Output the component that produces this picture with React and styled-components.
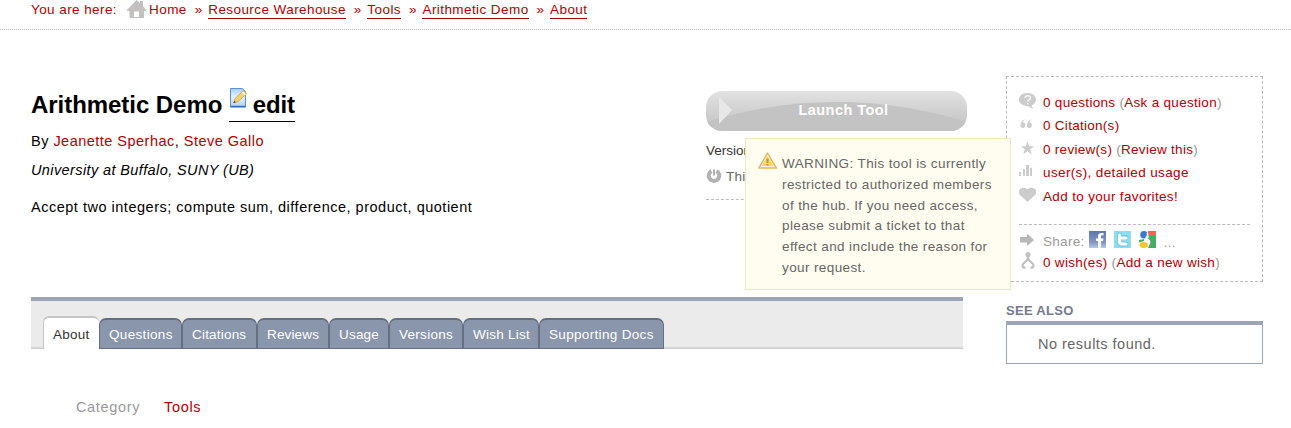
import React from "react";
import styled, { createGlobalStyle } from "styled-components";

const Global = createGlobalStyle`
  * { box-sizing: border-box; }
  body { margin: 0; background: #fff; color: #000; overflow: hidden;
    font-family: "Liberation Sans", Arial, Helvetica, sans-serif; font-size: 13.5px; }
  h1, h2, p, ul { margin: 0; padding: 0; }
  svg { display: block; flex: none; }
`;

const Page = styled.div`width: 1291px; height: 428px; overflow: hidden;`;
const Trail = styled.nav`
  display: flex; align-items: flex-start; height: 30px; padding-left: 31px;
  border-bottom: 1px dotted #bbb; color: #b00000; letter-spacing: 0.42px; line-height: 18px;
`;
const Crumb = styled.a`
  height: 19px; padding-top: 1px; margin-right: ${(p) => p.$gap || 0}px; white-space: nowrap;
  border-bottom: ${(p) => (p.$plain ? "0" : "1px solid #b00000")};
`;
const Sep = styled.span`width: 13.5px; padding-top: 1px; flex: none; letter-spacing: 0;`;
const Home = styled.span`display: flex; width: 22px; margin-left: 10px;`;

const Columns = styled.div`display: flex; padding: 46px 28px 0 31px; align-items: flex-start;`;
const Main = styled.main`width: 936px; margin-right: 39px;`;
const Intro = styled.section`display: flex; justify-content: space-between; height: 221px; padding-top: 12px;`;
const Details = styled.div`width: 600px; font-size: 14.5px; white-space: nowrap;`;
const Title = styled.h1`
  display: flex; height: 34px; font-size: 24px; line-height: 34px; letter-spacing: -0.05px;
`;
const Edit = styled.a`
  display: flex; margin-left: 7px; width: 66px; height: 34px; border-bottom: 1px solid #000;
  span { margin-left: 3.5px; letter-spacing: -0.15px; }
`;
const Line = styled.p`
  margin-top: ${(p) => p.$top}px; line-height: 20px; letter-spacing: ${(p) => p.$ls}px;
  font-style: ${(p) => (p.$italic ? "italic" : "normal")};
`;
const Link = styled.a`color: #b00000;`;
const Launch = styled.div`position: relative; width: 261px; padding-top: 3px;`;
const Button = styled.div`
  display: grid; height: 40px; border-radius: 16px; overflow: hidden;
  > * { grid-area: 1 / 1; }
  span { z-index: 1; align-self: center; text-align: center; color: #fff; font-weight: bold;
    font-size: 14.5px; letter-spacing: 0.45px; padding: 0 0 2px 14px; }
`;
const Version = styled.p`margin-top: 10px; line-height: 20px; color: #333; letter-spacing: 0;`;
const Status = styled.p`
  display: flex; align-items: center; height: 38px; padding-bottom: 9px; margin-top: 1px; gap: 4px;
  border-bottom: 1px dashed #bbb; color: #666; letter-spacing: 0.2px;
`;
const Tooltip = styled.div`
  position: absolute; left: 39px; top: 50px; z-index: 2; width: 266px; height: 152px;
  display: flex; gap: 4px; padding: 13px 12px; background: #fffdf0; border: 1px solid #efe8bb;
  color: #666; line-height: 20.8px; letter-spacing: 0.39px; white-space: nowrap;
  p { padding-top: 2px; }
`;
const TabBar = styled.div`
  display: flex; align-items: flex-end; width: 932px; height: 52px; padding-left: 12px;
  border-top: 4px solid #9ca5b7;
  background: linear-gradient(#ebebeb 0 44px, #f0f0f0 45px, #e0e0e0 46px, #c8c8c8 48px);
`;
const Tab = styled.div`
  width: ${(p) => p.$w}px; height: ${(p) => (p.$on ? 33 : 31)}px;
  padding: ${(p) => (p.$on ? "2px 0 0 9px" : "0 0 0 9px")};
  border: solid ${(p) => (p.$on ? "#c6c6c6" : "#666f80")};
  border-width: ${(p) => (p.$on ? "2px 0 0 1px" : "2px 1px 1px 1px")};
  border-radius: ${(p) => (p.$on ? "6px 6px 0 0" : "7px 7px 0 0")};
  background: ${(p) => (p.$on ? "#fff" : "#8a96ac")};
  color: ${(p) => (p.$on ? "#333" : "#fff")};
  line-height: 29px; letter-spacing: ${(p) => p.$ls}px; white-space: nowrap;
`;
const Category = styled.div`
  display: flex; padding: 48px 0 0 45px; gap: 24px; color: #999; font-size: 14.5px;
  line-height: 20px; letter-spacing: 0.65px;
`;
const Aside = styled.aside`width: 257px;`;
const Stats = styled.div`
  height: 206px; border: 1px dashed #bbb; padding: 14px 12px 0; color: #999;
`;
const Row = styled.div`
  display: flex; height: ${(p) => p.$h}px; letter-spacing: ${(p) => p.$ls}px;
  white-space: nowrap; line-height: 23px;
`;
const IconCell = styled.span`width: 24px; padding-top: ${(p) => p.$top || 2}px; flex: none;`;
const Rule = styled.div`border-top: 1px dashed #bbb; margin: 15px 0 5px;`;
const Shares = styled.span`display: flex; gap: 8px; margin-left: 4px; padding-top: 1px;`;
const See = styled.h2`
  margin-top: 20px; font-size: 13px; line-height: 18px; letter-spacing: 0.3px; color: #737b8c;
`;
const Results = styled.div`
  height: 43px; margin-top: 1px; padding-left: 31px; border: 1px solid #9ca5b7; border-top-width: 4px;
  color: #666; font-size: 14.5px; line-height: 38px; letter-spacing: 0.48px;
`;

const Svg = ({ w = 17, h = 17, children }) => (
  <svg width={w} height={h} viewBox={`0 0 ${w} ${h}`} fill="#ccc">{children}</svg>
);
const HouseIcon = () => (
  <Svg w={19} h={18}>
    <path fill="#c5c0c0" d="M9.5 0 13 3V1h3v5l3 4v1h-2v7H2.5v-7H0v-1Z" />
    <path fill="#fff" d="M7 11.5h5V17H7z" />
  </Svg>
);
const EditIcon = () => (
  <svg width="20" height="22" viewBox="0 0 20 22">
    <defs><linearGradient id="sheet" x1="0" y1="0" x2="0" y2="1">
      <stop stopColor="#a9cdf1" /><stop offset=".45" stopColor="#e4f1fc" /><stop offset="1" stopColor="#b3d3f6" />
    </linearGradient></defs>
    <path d="M1.500 .500h12l3 3V19H1.500Z" fill="url(#sheet)" stroke="#5b93d2" />
    <path d="M1.500 18.500h15" stroke="#2d6ecb" strokeWidth="1.500" />
    <path d="m4.500 15 1.500-4.500L14.500 2.700l3.200 2.900-8.500 7.900Z" fill="#f5d06b" stroke="#c49543" strokeWidth=".7" />
    <path d="m13.300 4 3 3" stroke="#fff" strokeWidth="1.200" />
    <path d="m4.500 15 .8-2.300 1.600 1.500Z" fill="#444" />
  </svg>
);
const WarningIcon = () => (
  <svg width="20" height="18" viewBox="0 0 20 18">
    <path d="M9.500 1.200 18.300 16H.900Z" fill="#fff" stroke="#e9b65a" strokeWidth="1.500" strokeLinejoin="round" />
    <path d="M9.500 4 15.900 14.300H3.200Z" fill="#f8d764" />
    <path d="M9.500 6.500V11M9.500 12v1.600" stroke="#c29a2b" strokeWidth="2" />
  </svg>
);
const QuestionIcon = () => (
  <Svg>
    <path d="M8.500 0C13 0 17 2.500 17 6.500c0 3-2 5-4.500 6L14 16l-5-3C4 13 0 10.500 0 6.500S4 0 8.500 0Z" />
    <path d="M6 5c0-3 5.500-3 5.500 0C11.500 7 8.700 6.700 8.700 8.500M8.700 9.800v1.600" stroke="#f4f4f4" strokeWidth="1.400" fill="none" />
  </Svg>
);
const QuoteIcon = () => (
  <Svg><path d="M6.500 4C4.700 4.800 4 6 4 7.500c3.200-.5 3.200 5.500 0 5.500C0 13 1 5 6.500 4ZM13 4c-1.800.8-2.500 2-2.500 3.500 3.200-.5 3.200 5.500 0 5.500C6.500 13 7.500 5 13 4Z" /></Svg>
);
const StarIcon = () => (
  <Svg><path d="m8.500 1.500 1.700 4.700h5l-4 3.100 1.500 4.900-4.200-3-4.200 3 1.500-4.900-4-3.100h5Z" /></Svg>
);
const BarsIcon = () => (
  <Svg><path d="M0 9h2v4H0zM4 6h2v7H4zM7 2h3v11H7zM11 5h2v8h-2z" /></Svg>
);
const HeartIcon = () => (
  <Svg><path d="M8.500 15 1 8C-2 4 1 .8 4.500 .8 6.500.8 7.500 1.500 8.500 2.300 9.500 1.500 10.500.8 12.500.8 16 .8 19 4 16 8Z" /></Svg>
);
const ArrowIcon = () => (
  <Svg><path fill="#b8b8b8" d="M1 6h7V2.500l7 6.500-7 6v-3.500H1Z" /></Svg>
);
const WishIcon = () => (
  <Svg w={18} h={19}>
    <path d="M9 3v3.500M9 6.500C8.500 9.500 3.500 10.500 3.500 13.500c0 1.500.8 2.200 3 2.200M9 6.500c.500 3 5.500 4 5.500 7 0 1.500-.8 2.200-3 2.200" fill="none" stroke="#c2c2c2" strokeWidth="2.300" />
    <circle cx="9" cy="2.700" r="2.600" fill="#c2c2c2" />
  </Svg>
);
const PowerIcon = () => (
  <Svg w={16} h={16}>
    <path d="M5.500 3A5.300 5.300 0 1 0 10.500 3" fill="none" stroke="#b2b2b2" strokeWidth="4.200" />
    <path d="M7 1.500h2v6H7Z" fill="#b2b2b2" />
  </Svg>
);
const FacebookIcon = () => (
  <Svg>
    <defs><linearGradient id="fb" x1="0" y1="0" x2="0" y2="1">
      <stop stopColor="#5d77ac" /><stop offset=".65" stopColor="#8196c0" /><stop offset="1" stopColor="#b7c6e4" />
    </linearGradient></defs>
    <path fill="url(#fb)" d="M0 0h17v17H0z" />
    <path fill="#fff" d="M9 17v-7H7V7.500h2V5c0-2.500 2-3.500 5.500-3v2.400c-2-.2-2.500 0-2.500 1.300v1.800h2.500L14 10h-2v7Z" />
  </Svg>
);
const TwitterIcon = () => (
  <Svg>
    <path fill="#8fdcf1" d="M0 0h17v17H0z" />
    <path d="M5.500 4v6.500c0 2 1 2.500 3 2.500h3.500M5.500 6.500H12" fill="none" stroke="#6cc9e4" strokeWidth="5" strokeLinecap="round" />
    <path d="M5.500 4v6.500c0 2 1 2.500 3 2.500h3.500M5.500 7h6.500" fill="none" stroke="#fff" strokeWidth="3.200" strokeLinecap="round" />
  </Svg>
);
const GoogleIcon = () => (
  <Svg>
    <path fill="#fff" d="M0 0h17v17H0z" /><path fill="#f56352" d="M9 0h8v5H9z" />
    <path fill="#47ad64" d="M10 5h7v12H9l2-5-2-4Z" />
    <circle cx="5" cy="3.800" r="3.800" fill="#3c78cc" /><path fill="#47ad64" d="m0 9 5-1v2l-5 1.500Z" />
    <ellipse cx="4.800" cy="14" rx="4.300" ry="3" fill="#f2c62f" />
    <path d="M8 2c3 3-3 4 0 6 4 2 3 4 1 6" fill="none" stroke="#fff" strokeWidth="1.500" />
  </Svg>
);
const ButtonArt = () => (
  <svg width="261" height="40" viewBox="0 0 261 40">
    <defs><linearGradient id="shine" x1="0" y1="0" x2="0" y2="1">
      <stop stopColor="#e2e2e2" /><stop offset="1" stopColor="#c0c0c0" />
    </linearGradient></defs>
    <path d="M0 0h261v40H0z" fill="url(#shine)" />
    <path d="M0 31Q130-9 261 31v9H0Z" fill="#c3c3c3" />
    <path d="M13 6v27l13-14Z" fill="#e8e8e8" />
  </svg>
);

const tabs = [
  ["About", 56, 0.25], ["Questions", 83, 0.33], ["Citations", 75, 0.2], ["Reviews", 72, 0.15],
  ["Usage", 60, 0.2], ["Versions", 74, 0.28], ["Wish List", 76, 0.25], ["Supporting Docs", 125, 0.33],
];

export default function App() {
  return (
    <Page>
      <Global />
      <Trail>
        <Crumb $plain>You are here:</Crumb>
        <Home><HouseIcon /></Home>
        <Crumb $plain $gap={8}>Home</Crumb><Sep>»</Sep>
        <Crumb $gap={8}>Resource Warehouse</Crumb><Sep>»</Sep>
        <Crumb $gap={8}>Tools</Crumb><Sep>»</Sep>
        <Crumb $gap={8}>Arithmetic Demo</Crumb><Sep>»</Sep>
        <Crumb>About</Crumb>
      </Trail>
      <Columns>
        <Main>
          <Intro>
            <Details>
              <Title>Arithmetic Demo<Edit><EditIcon /><span>edit</span></Edit></Title>
              <Line $top={9} $ls={0.48}>By <Link>Jeanette Sperhac</Link>, <Link>Steve Gallo</Link></Line>
              <Line $top={9} $ls={0.39} $italic>University at Buffalo, SUNY (UB)</Line>
              <Line $top={17} $ls={0.51}>Accept two integers; compute sum, difference, product, quotient</Line>
            </Details>
            <Launch>
              <Button><ButtonArt /><span>Launch Tool</span></Button>
              <Version>Version</Version>
              <Status><PowerIcon />This</Status>
              <Tooltip>
                <WarningIcon />
                <p>WARNING: This tool is currently<br />restricted to authorized members<br />of the hub. If you need access,<br />please submit a ticket to that<br />effect and include the reason for<br />your request.</p>
              </Tooltip>
            </Launch>
          </Intro>
          <TabBar>
            {tabs.map(([name, w, ls], i) => <Tab key={name} $w={w} $ls={ls} $on={i === 0}>{name}</Tab>)}
          </TabBar>
          <Category><span>Category</span><Link>Tools</Link></Category>
        </Main>
        <Aside>
          <Stats>
            <Row $ls={0.3} $h={23}><IconCell><QuestionIcon /></IconCell><span><Link>0 questions</Link> (<Link>Ask a question</Link>)</span></Row>
            <Row $ls={0.28} $h={24}><IconCell $top={1}><QuoteIcon /></IconCell><Link>0 Citation(s)</Link></Row>
            <Row $ls={0.29} $h={23}><IconCell><StarIcon /></IconCell><span><Link>0 review(s)</Link> (<Link>Review this</Link>)</span></Row>
            <Row $ls={0.37} $h={24}><IconCell><BarsIcon /></IconCell><Link>user(s), detailed usage</Link></Row>
            <Row $ls={0.34} $h={23.5}><IconCell><HeartIcon /></IconCell><Link>Add to your favorites!</Link></Row>
            <Rule />
            <Row $ls={0.3} $h={21}><IconCell $top={1}><ArrowIcon /></IconCell>Share:<Shares><FacebookIcon /><TwitterIcon /><GoogleIcon /><span>...</span></Shares></Row>
            <Row $ls={0.3} $h={21}><IconCell $top={1}><WishIcon /></IconCell><span><Link>0 wish(es)</Link> (<Link>Add a new wish</Link>)</span></Row>
          </Stats>
          <See>SEE ALSO</See>
          <Results>No results found.</Results>
        </Aside>
      </Columns>
    </Page>
  );
}
